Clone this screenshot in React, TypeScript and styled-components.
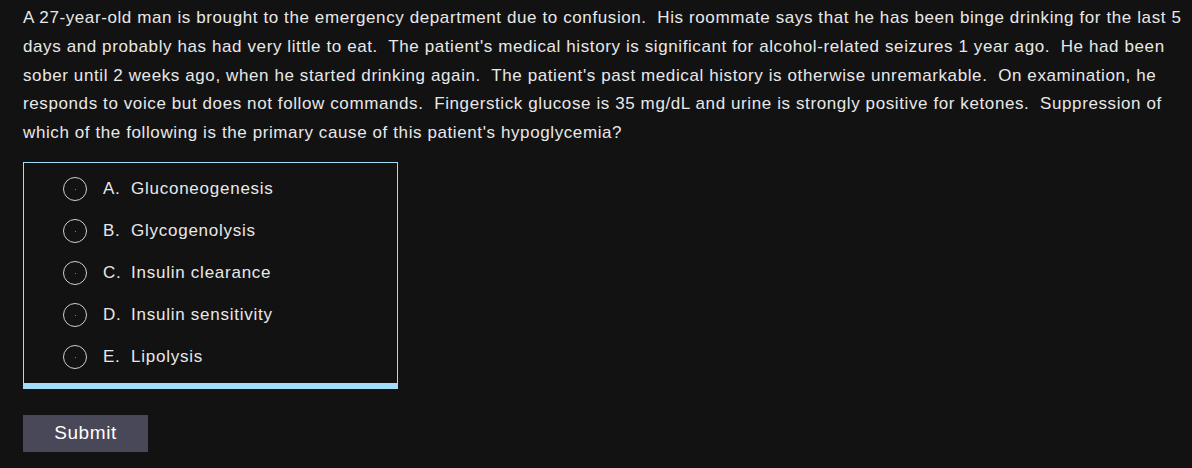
import styled, { createGlobalStyle } from 'styled-components';

const GlobalStyle = createGlobalStyle`
  html, body {
    margin: 0;
    padding: 0;
    background-color: #121212;
  }
  body {
    font-family: "Liberation Sans", Arial, sans-serif;
    color: #e8e8e8;
  }
`;

const Page = styled.div`
  padding: 4px 6px 0 23px;
`;

const Stem = styled.p`
  margin: 0;
  font-size: 17px;
  letter-spacing: 0.6px;
  line-height: 28.8px;
  white-space: pre-wrap;
`;

const Choices = styled.div`
  margin-top: 14px;
  width: 373px;
  border: 1px solid #a3dcfb;
  border-bottom: 6px solid #a3dcfb;
  padding: 5px 0;
`;

const Choice = styled.label`
  display: flex;
  align-items: center;
  height: 42px;
  padding-left: 39px;
  font-size: 17px;
  letter-spacing: 0.75px;
  cursor: pointer;
`;

const Radio = styled.span`
  position: relative;
  width: 22px;
  height: 22px;
  border: 1.5px solid #cfcfcf;
  border-radius: 50%;
  flex-shrink: 0;

  &::after {
    content: '';
    position: absolute;
    left: 50%;
    top: 50%;
    width: 1px;
    height: 1px;
    background: #4a90c0;
  }
`;

const Letter = styled.span`
  margin-left: 16px;
  width: 28px;
`;

const Submit = styled.button`
  margin-top: 26px;
  width: 125px;
  height: 37px;
  border: none;
  background-color: #484858;
  color: #ffffff;
  font-family: "Liberation Sans", Arial, sans-serif;
  font-size: 19px;
  letter-spacing: 0.6px;
  cursor: pointer;
`;

const options = [
  { letter: 'A.', text: 'Gluconeogenesis' },
  { letter: 'B.', text: 'Glycogenolysis' },
  { letter: 'C.', text: 'Insulin clearance' },
  { letter: 'D.', text: 'Insulin sensitivity' },
  { letter: 'E.', text: 'Lipolysis' },
];

const App = () => {
  return (
    <Page>
      <GlobalStyle />
      <Stem>
        {"A 27-year-old man is brought to the emergency department due to confusion.  His roommate says that he has been binge drinking for the last 5 days and probably has had very little to eat.  The patient's medical history is significant for alcohol-related seizures 1 year ago.  He had been sober until 2 weeks ago, when he started drinking again.  The patient's past medical history is otherwise unremarkable.  On examination, he responds to voice but does not follow commands.  Fingerstick glucose is 35 mg/dL and urine is strongly positive for ketones.  Suppression of which of the following is the primary cause of this patient's hypoglycemia?"}
      </Stem>
      <Choices>
        {options.map((o) => (
          <Choice key={o.letter}>
            <Radio />
            <Letter>{o.letter}</Letter>
            <span>{o.text}</span>
          </Choice>
        ))}
      </Choices>
      <Submit>Submit</Submit>
    </Page>
  );
};

export default App;
